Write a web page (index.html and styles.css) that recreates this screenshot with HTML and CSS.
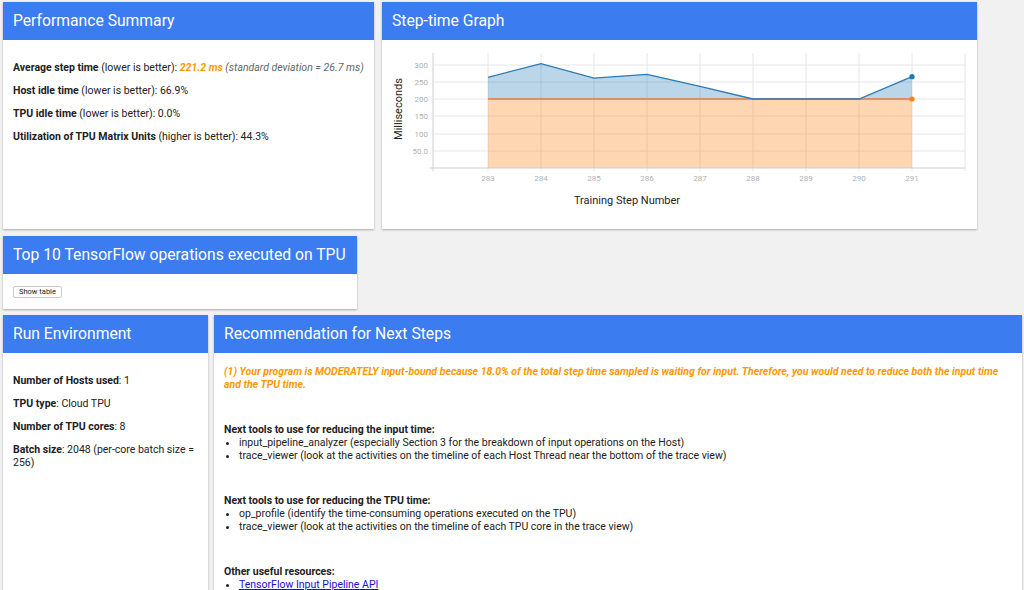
FILE: index.html
```html
<!DOCTYPE html>
<html lang="en">
<head>
    <meta charset="UTF-8">
    <title>Overview Page</title>
    <link rel="stylesheet" href="styles.css">
</head>
<body>
    <div class="pagina">
        <div class="fila">
            <div class="tarjeta resumen">
                <div class="cabecera">Performance Summary</div>
                <div class="cuerpo">
                    <p><b>Average step time</b> (lower is better): <span class="naranja">221.2 ms</span> <i class="gris">(standard deviation = 26.7 ms)</i></p>
                    <p><b>Host idle time</b> (lower is better): 66.9%</p>
                    <p><b>TPU idle time</b> (lower is better): 0.0%</p>
                    <p><b>Utilization of TPU Matrix Units</b> (higher is better): 44.3%</p>
                </div>
            </div>
            <div class="tarjeta grafica">
                <div class="cabecera">Step-time Graph</div>
                <svg class="svg-grafica" width="595" height="189" viewBox="0 0 595 189">
                    <g class="rejilla">
                        <line x1="51" y1="25" x2="583" y2="25"/>
                        <line x1="51" y1="42" x2="583" y2="42"/>
                        <line x1="51" y1="59" x2="583" y2="59"/>
                        <line x1="51" y1="76" x2="583" y2="76"/>
                        <line x1="51" y1="94" x2="583" y2="94"/>
                        <line x1="51" y1="111" x2="583" y2="111"/>
                        <line x1="106" y1="13" x2="106" y2="131"/>
                        <line x1="159" y1="13" x2="159" y2="131"/>
                        <line x1="212" y1="13" x2="212" y2="131"/>
                        <line x1="265" y1="13" x2="265" y2="131"/>
                        <line x1="318" y1="13" x2="318" y2="131"/>
                        <line x1="371" y1="13" x2="371" y2="131"/>
                        <line x1="424" y1="13" x2="424" y2="131"/>
                        <line x1="477" y1="13" x2="477" y2="131"/>
                        <line x1="530" y1="13" x2="530" y2="131"/>
                        <line x1="583" y1="13" x2="583" y2="131"/>
                    </g>
                    <polygon class="area-naranja" points="106,59 530,59 530,128 106,128"/>
                    <polygon class="area-azul" points="106,37.4 159,23.6 212,38.1 265,34.3 318,46.3 371,59 424,59 477,59 530,36.7 530,59 106,59"/>
                    <line class="linea-naranja" x1="106" y1="59" x2="530" y2="59"/>
                    <polyline class="linea-azul" points="106,37.4 159,23.6 212,38.1 265,34.3 318,46.3 371,59 424,59 477,59 530,36.7"/>
                    <circle cx="530" cy="36.7" r="2.6" fill="#1f77b4"/>
                    <circle cx="530" cy="59" r="2.6" fill="#ff7f0e"/>
                    <g class="ejes">
                        <line x1="51" y1="13" x2="51" y2="131"/>
                        <line x1="48" y1="128" x2="583" y2="128"/>
                    </g>
                    <g class="etiquetas-y">
                        <text x="46" y="28">300</text>
                        <text x="46" y="45">250</text>
                        <text x="46" y="62">200</text>
                        <text x="46" y="79">150</text>
                        <text x="46" y="97">100</text>
                        <text x="46" y="114">50.0</text>
                    </g>
                    <g class="etiquetas-x">
                        <text x="106" y="141">283</text>
                        <text x="159" y="141">284</text>
                        <text x="212" y="141">285</text>
                        <text x="265" y="141">286</text>
                        <text x="318" y="141">287</text>
                        <text x="371" y="141">288</text>
                        <text x="424" y="141">289</text>
                        <text x="477" y="141">290</text>
                        <text x="530" y="141">291</text>
                    </g>
                    <text class="titulo-eje" x="245" y="164">Training Step Number</text>
                    <text class="titulo-eje" transform="translate(20,69) rotate(-90)">Milliseconds</text>
                </svg>
            </div>
        </div>

        <div class="tarjeta top-ops">
            <div class="cabecera">Top 10 TensorFlow operations executed on TPU</div>
            <div class="cuerpo-boton">
                <button class="boton">Show table</button>
            </div>
        </div>

        <div class="fila fila-baja">
            <div class="tarjeta entorno">
                <div class="cabecera">Run Environment</div>
                <div class="cuerpo">
                    <p><b>Number of Hosts used</b>: 1</p>
                    <p><b>TPU type</b>: Cloud TPU</p>
                    <p><b>Number of TPU cores</b>: 8</p>
                    <p><b>Batch size</b>: 2048 (per-core batch size = 256)</p>
                </div>
            </div>
            <div class="tarjeta recomendacion">
                <div class="cabecera">Recommendation for Next Steps</div>
                <div class="cuerpo-rec">
                    <p class="aviso">(1) Your program is MODERATELY input-bound because 18.0% of the total step time sampled is waiting for input. Therefore, you would need to reduce both the input time and the TPU time.</p>
                    <div class="seccion">
                        <b>Next tools to use for reducing the input time:</b>
                        <ul>
                            <li>input_pipeline_analyzer (especially Section 3 for the breakdown of input operations on the Host)</li>
                            <li>trace_viewer (look at the activities on the timeline of each Host Thread near the bottom of the trace view)</li>
                        </ul>
                    </div>
                    <div class="seccion">
                        <b>Next tools to use for reducing the TPU time:</b>
                        <ul>
                            <li>op_profile (identify the time-consuming operations executed on the TPU)</li>
                            <li>trace_viewer (look at the activities on the timeline of each TPU core in the trace view)</li>
                        </ul>
                    </div>
                    <div class="seccion">
                        <b>Other useful resources:</b>
                        <ul>
                            <li><a href="#">TensorFlow Input Pipeline API</a></li>
                        </ul>
                    </div>
                </div>
            </div>
        </div>
    </div>
</body>
</html>
```

FILE: styles.css
```css
body {
    margin: 0;
    background-color: #f1f1f1;
    font-family: Roboto, "Liberation Sans", sans-serif;
    color: #212121;
    overflow: hidden;
}
.pagina {
    padding: 2px 0 0 3px;
}
.fila {
    display: flex;
    gap: 8px;
    align-items: flex-start;
}
.fila-baja {
    gap: 6px;
    margin-top: 6px;
}
.tarjeta {
    background: #ffffff;
    box-shadow: 0 1px 2px rgba(0, 0, 0, 0.3);
}
.cabecera {
    background: #3b7cf0;
    color: #ffffff;
    height: 38px;
    line-height: 38px;
    padding-left: 10px;
    font-size: 15.7px;
    white-space: nowrap;
}
.resumen {
    width: 371px;
    height: 227px;
}
.grafica {
    width: 595px;
    height: 227px;
}
.cuerpo {
    padding: 11px 10px;
    font-size: 10.5px;
}
.cuerpo p {
    margin: 10px 0;
    line-height: 13px;
}
.naranja {
    color: #ff9800;
    font-weight: bold;
    font-style: italic;
}
.gris {
    color: #666;
}
.svg-grafica {
    display: block;
}
.rejilla line {
    stroke: #e6e6e6;
    stroke-width: 1;
}
.ejes line {
    stroke: #cfcfcf;
    stroke-width: 1;
}
.area-naranja {
    fill: #ff7f0e;
    fill-opacity: 0.32;
}
.area-azul {
    fill: #1f77b4;
    fill-opacity: 0.3;
}
.linea-naranja {
    stroke: #e8793a;
    stroke-width: 1.5;
}
.linea-azul {
    fill: none;
    stroke: #2c7bb6;
    stroke-width: 1.3;
}
.etiquetas-y text {
    font-size: 8px;
    fill: #b0b0b0;
    text-anchor: end;
}
.etiquetas-x text {
    font-size: 8px;
    fill: #b0b0b0;
    text-anchor: middle;
}
.titulo-eje {
    font-size: 11px;
    fill: #222;
    text-anchor: middle;
}
.top-ops {
    width: 354px;
    height: 73px;
    margin-top: 7px;
}
.cuerpo-boton {
    padding: 12px 10px;
}
.boton {
    display: block;
    font-family: Roboto, "Liberation Sans", sans-serif;
    font-size: 7.5px;
    color: #222;
    background: #fff;
    border: 1px solid #cccccc;
    border-radius: 2px;
    padding: 0 5px;
    height: 12px;
    line-height: 10px;
}
.entorno {
    width: 205px;
    height: 300px;
}
.recomendacion {
    width: 808px;
    height: 300px;
    flex-shrink: 0;
}
.cuerpo-rec {
    padding: 12px 10px;
    font-size: 10.5px;
    line-height: 13px;
}
.aviso {
    margin: 0;
    color: #ff9800;
    font-weight: bold;
    font-style: italic;
}
.seccion {
    margin-top: 32px;
}
.seccion ul {
    margin: 0;
    padding-left: 15px;
}
.seccion a {
    color: #1a0dcc;
}
```
